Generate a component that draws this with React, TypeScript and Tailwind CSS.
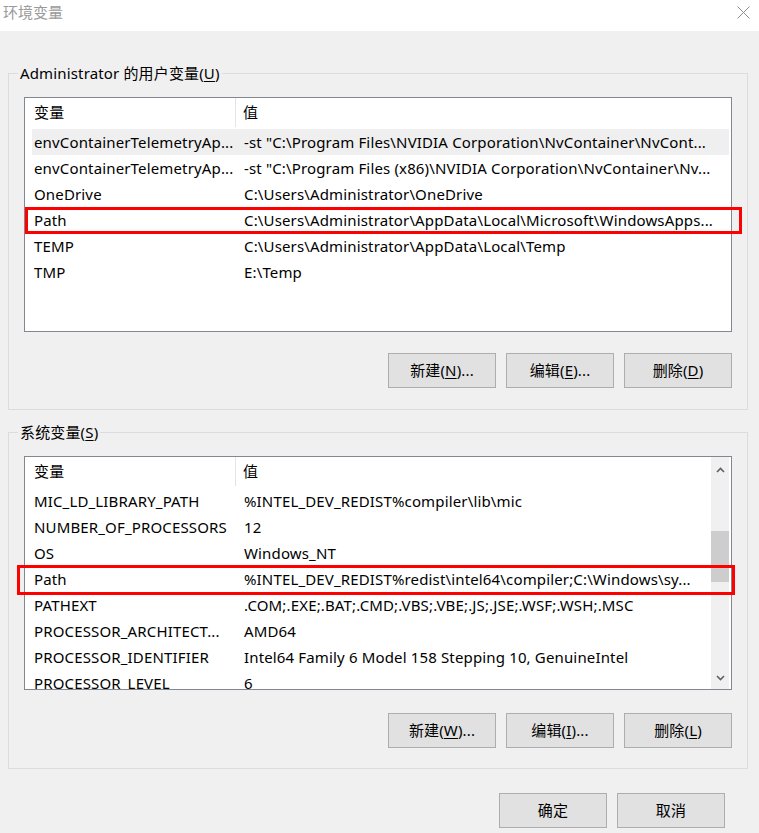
import React from "react";

type Row = { name: string; value: string; hover?: boolean };

const userRows: Row[] = [
  { name: "envContainerTelemetryAp...", value: '-st "C:\\Program Files\\NVIDIA Corporation\\NvContainer\\NvCont...', hover: true },
  { name: "envContainerTelemetryAp...", value: '-st "C:\\Program Files (x86)\\NVIDIA Corporation\\NvContainer\\Nv...' },
  { name: "OneDrive", value: "C:\\Users\\Administrator\\OneDrive" },
  { name: "Path", value: "C:\\Users\\Administrator\\AppData\\Local\\Microsoft\\WindowsApps..." },
  { name: "TEMP", value: "C:\\Users\\Administrator\\AppData\\Local\\Temp" },
  { name: "TMP", value: "E:\\Temp" },
];

const sysRows: Row[] = [
  { name: "MIC_LD_LIBRARY_PATH", value: "%INTEL_DEV_REDIST%compiler\\lib\\mic" },
  { name: "NUMBER_OF_PROCESSORS", value: "12" },
  { name: "OS", value: "Windows_NT" },
  { name: "Path", value: "%INTEL_DEV_REDIST%redist\\intel64\\compiler;C:\\Windows\\sy..." },
  { name: "PATHEXT", value: ".COM;.EXE;.BAT;.CMD;.VBS;.VBE;.JS;.JSE;.WSF;.WSH;.MSC" },
  { name: "PROCESSOR_ARCHITECT...", value: "AMD64" },
  { name: "PROCESSOR_IDENTIFIER", value: "Intel64 Family 6 Model 158 Stepping 10, GenuineIntel" },
  { name: "PROCESSOR_LEVEL", value: "6" },
];

function Header() {
  return (
    <div className="flex h-[31px] shrink-0 ml-[7px] items-center pb-[2px]">
      <div className="w-[204px] pl-[2px] h-full flex items-center border-r border-[#e5e5e5]">变量</div>
      <div className="pl-[7px]">值</div>
    </div>
  );
}

function RowView({ r }: { r: Row }) {
  return (
    <div className={`flex h-[26px] shrink-0 ml-[7px] mr-[2px] items-center whitespace-nowrap ${r.hover ? "bg-[#efefef]" : ""}`}>
      <div className="w-[204px] pl-[2px] overflow-hidden">{r.name}</div>
      <div className="pl-[8px] overflow-hidden flex-1">{r.value}</div>
    </div>
  );
}

function Chevron({ up }: { up?: boolean }) {
  return (
    <svg width="9" height="6" viewBox="0 0 9 6" className="block">
      <path
        d={up ? "M1 5 L4.5 1.5 L8 5" : "M1 1 L4.5 4.5 L8 1"}
        fill="none"
        stroke="#606060"
        strokeWidth="1.6"
      />
    </svg>
  );
}

function Btn({ pre, u, post }: { pre: string; u?: string; post?: string }) {
  return (
    <div className="w-[108px] h-[35px] bg-[#e1e1e1] border border-[#adadad] flex items-center justify-center">
      <span>
        {pre}
        {u !== undefined && (
          <>
            (<span className="underline underline-offset-[2px]">{u}</span>)
          </>
        )}
        {post}
      </span>
    </div>
  );
}

export default function App() {
  return (
    <div className="w-[759px] h-[833px] bg-[#f0f0f0] text-[15px] tracking-[0.15px] text-black font-['Noto_Sans','Noto_Sans_CJK_SC',sans-serif] overflow-hidden">
      {/* title bar */}
      <div className="h-[31px] bg-white flex items-start justify-between pt-[2px]">
        <div className="pl-[3px] leading-[20px] text-[15px] tracking-normal text-[#9a9a9a]">环境变量</div>
        <svg width="13" height="13" viewBox="0 0 13 13" className="mt-[4px] mr-[9px]">
          <path d="M0.5 0.5 L12.5 12.5 M12.5 0.5 L0.5 12.5" stroke="#8a8a8a" strokeWidth="1" />
        </svg>
      </div>

      {/* user variables group */}
      <div className="relative ml-[8px] mt-[42px] w-[740px] border border-[#dcdcdc] px-[15px] pt-[23px] pb-[21px]">
        <div className="absolute left-[9px] top-[-11px] bg-[#f0f0f0] px-[2px] leading-[20px]">
          Administrator 的用户变量(<span className="underline underline-offset-[2px]">U</span>)
        </div>
        <div className="relative h-[235px] border border-[#828790] bg-white">
          <div className="flex flex-col h-full overflow-hidden">
            <Header />
            {userRows.map((r, i) => (
              <RowView key={i} r={r} />
            ))}
          </div>
          <div className="absolute left-0 top-[109px] w-[717px] h-[27px] border-[3px] border-[#ff0000]" />
        </div>
        <div className="flex justify-end gap-[10px] mt-[21px]">
          <Btn pre="新建" u="N" post="..." />
          <Btn pre="编辑" u="E" post="..." />
          <Btn pre="删除" u="D" />
        </div>
      </div>

      {/* system variables group */}
      <div className="relative ml-[8px] mt-[22px] w-[740px] border border-[#dcdcdc] px-[15px] pt-[23px] pb-[20px]">
        <div className="absolute left-[9px] top-[-11px] bg-[#f0f0f0] px-[2px] leading-[20px]">
          系统变量(<span className="underline underline-offset-[2px]">S</span>)
        </div>
        <div className="relative h-[234px] border border-[#828790] bg-white flex">
          <div className="flex-1 flex flex-col h-full overflow-hidden">
            <Header />
            {sysRows.map((r, i) => (
              <RowView key={i} r={r} />
            ))}
          </div>
          <div className="w-[18px] mr-[2px] h-full bg-[#f0f0f0] flex flex-col items-center">
            <div className="h-[26px] flex items-center justify-center">
              <Chevron up />
            </div>
            <div className="w-full h-[51px] mt-[48px] bg-[#cdcdcd]" />
            <div className="flex-1" />
            <div className="h-[22px] flex items-center justify-center">
              <Chevron />
            </div>
          </div>
          <div className="absolute left-[-8px] top-[108px] w-[718px] h-[30px] border-[3px] border-[#ff0000]" />
        </div>
        <div className="flex justify-end gap-[10px] mt-[23px]">
          <Btn pre="新建" u="W" post="..." />
          <Btn pre="编辑" u="I" post="..." />
          <Btn pre="删除" u="L" />
        </div>
      </div>

      {/* OK / Cancel */}
      <div className="flex justify-end gap-[10px] mt-[24px] pr-[34px]">
        <Btn pre="确定" />
        <Btn pre="取消" />
      </div>
    </div>
  );
}
